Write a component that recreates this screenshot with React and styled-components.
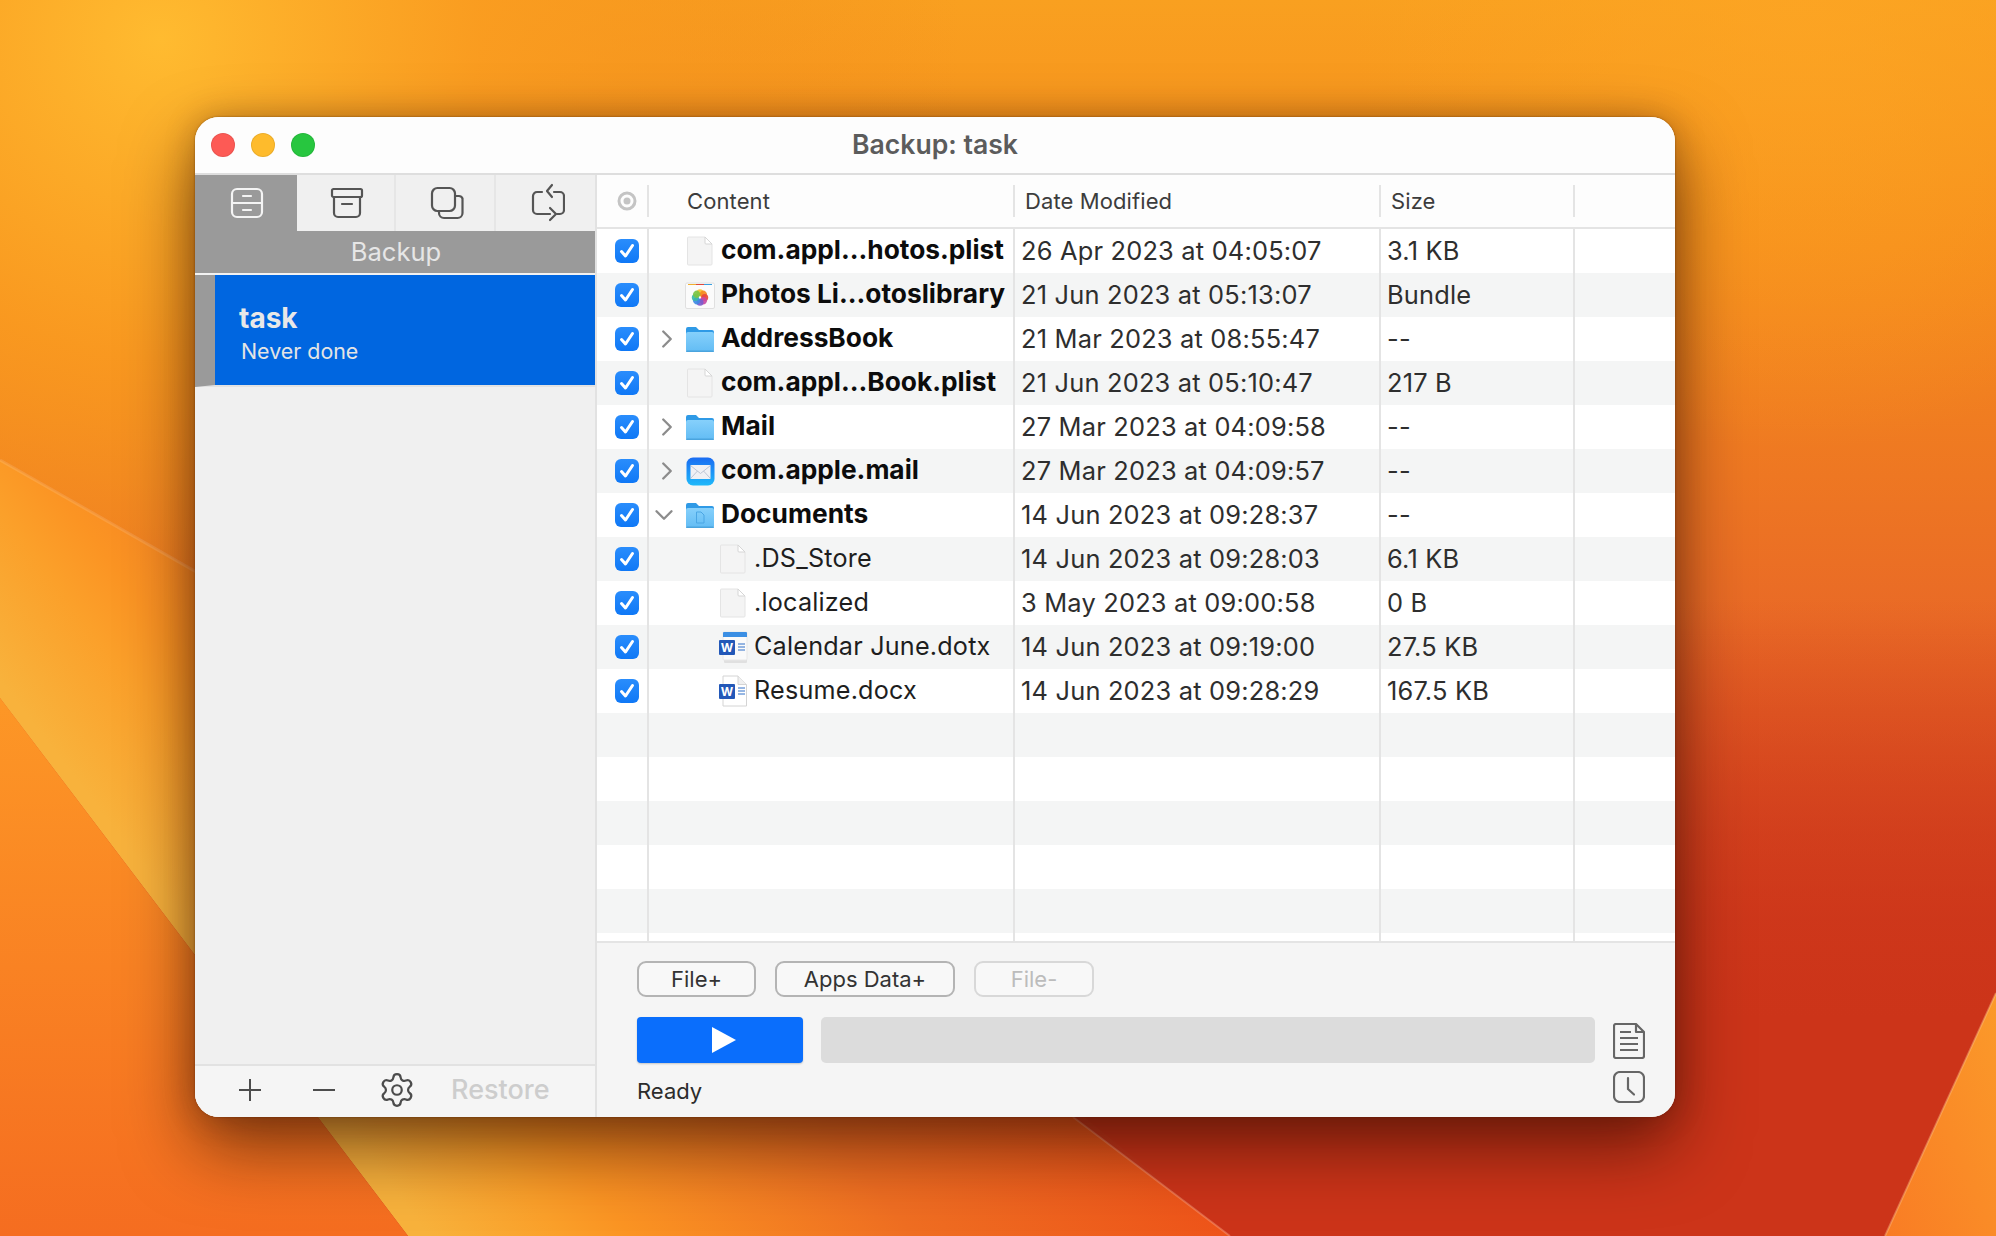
import styled, { createGlobalStyle } from 'styled-components';
import { ChevronDown, ChevronRight, Settings } from 'lucide-react';

const GlobalStyle = createGlobalStyle`
    html, body {
        margin: 0;
        padding: 0;
    }
    body {
        font-family: 'Inter', 'Liberation Sans', sans-serif;
        -webkit-font-smoothing: antialiased;
    }
    * {
        box-sizing: border-box;
    }
`;

const Desktop = styled.div`
    position: relative;
    width: 1996px;
    height: 1236px;
    padding: 117px 0 0 195px;
    overflow: hidden;
`;

const WallpaperSvg = styled.svg`
    position: absolute;
    inset: 0;
`;

const Window = styled.div`
    position: relative;
    width: 1480px;
    height: 1000px;
    display: flex;
    flex-direction: column;
    border-radius: 24px;
    overflow: hidden;
    background: #f5f5f5;
`;

const WindowShadow = styled.div`
    position: relative;
    width: 1480px;
    height: 1000px;
    border-radius: 24px;
    box-shadow: 0 0 2px rgba(70, 30, 0, 0.6), 0 0 30px rgba(60, 20, 0, 0.25), 0 30px 70px rgba(40, 10, 0, 0.6);
`;

const TitleBar = styled.div`
    position: relative;
    height: 58px;
    flex: none;
    display: flex;
    align-items: center;
    justify-content: center;
    padding-bottom: 2px;
    background: #fdfdfd;
    border-bottom: 2px solid #dedede;
`;

const Lights = styled.div`
    position: absolute;
    left: 16px;
    top: 16px;
    display: flex;
    gap: 16px;
`;

const Light = styled.span`
    width: 24px;
    height: 24px;
    border-radius: 50%;
    background: ${(p) => p.$color};
    box-shadow: inset 0 0 0 1px rgba(0, 0, 0, 0.08);
`;

const Title = styled.div`
    font-size: 26.6px;
    font-weight: 600;
    color: #5c5c5c;
`;

const Body = styled.div`
    flex: 1;
    min-height: 0;
    display: flex;
`;

const Sidebar = styled.div`
    width: 402px;
    flex: none;
    display: flex;
    flex-direction: column;
    background: #f0f0f0;
    border-right: 2px solid #e2e2e2;
`;

const Tabs = styled.div`
    height: 56px;
    flex: none;
    display: grid;
    grid-template-columns: 102px 1fr 1fr 1fr;
`;

const TabItem = styled.div`
    display: flex;
    align-items: center;
    justify-content: center;
    padding-left: ${(p) => (p.$last ? 6 : p.$shift || 2)}px;
    background: ${(p) => (p.$active ? '#9a9a9a' : '#f0f0f0')};
    border-right: ${(p) => (p.$active || p.$last ? 'none' : '2px solid #e6e6e6')};
    color: ${(p) => (p.$active ? '#f4f4f4' : '#555555')};
`;

const SectionBar = styled.div`
    height: 44px;
    flex: none;
    display: flex;
    align-items: center;
    justify-content: center;
    background: #9a9a9a;
    border-bottom: 2px solid #f2f2f2;
    font-size: 25.6px;
    color: #e6e6e6;
    padding: 0 0 1px 2px;
`;

const TaskItem = styled.div`
    height: 112px;
    flex: none;
    display: flex;
    flex-direction: column;
    justify-content: center;
    background: #0066e0;
    border-left: 20px solid #9a9a9a;
    border-bottom: 2px solid #e2e2e2;
    padding: 6px 0 0 24px;
`;

const TaskName = styled.div`
    font-size: 28px;
    font-weight: 700;
    line-height: 36px;
    color: #e8e8e8;
`;

const TaskState = styled.div`
    font-size: 21.4px;
    line-height: 30px;
    margin-left: 2px;
    color: #e4e4e4;
`;

const SideFill = styled.div`
    flex: 1;
`;

const SideFooter = styled.div`
    height: 53px;
    flex: none;
    display: flex;
    align-items: center;
    padding-bottom: 4px;
    background: #f5f5f5;
    border-top: 2px solid #e2e2e2;
    color: #4c4c4c;
`;

const FooterIcon = styled.div`
    width: ${(p) => p.$w}px;
    display: flex;
    justify-content: center;
`;

const RestoreLabel = styled.div`
    font-size: 27px;
    font-weight: 500;
    color: #cdcdcd;
`;

const Content = styled.div`
    flex: 1;
    min-width: 0;
    display: flex;
    flex-direction: column;
`;

const columns = '52px 366px 366px 194px 1fr';

const TableHead = styled.div`
    height: 54px;
    flex: none;
    display: grid;
    grid-template-columns: ${columns};
    align-items: center;
    background: #fdfdfd;
    border-bottom: 2px solid #e4e4e4;
`;

const HeadCell = styled.div`
    height: 32px;
    display: flex;
    align-items: center;
    padding-left: ${(p) => p.$pad || 0}px;
    border-right: ${(p) => (p.$plain ? 'none' : '2px solid #e4e4e4')};
    font-size: 22px;
    letter-spacing: 0.1px;
    color: #3c3c3c;
`;

const TableBody = styled.div`
    height: 712px;
    flex: none;
    overflow: hidden;
    background: #ffffff;
`;

const Row = styled.div`
    height: 44px;
    display: grid;
    grid-template-columns: ${columns};
    background: ${(p) => (p.$striped ? '#f4f5f5' : '#ffffff')};
`;

const Cell = styled.div`
    min-width: 0;
    display: flex;
    align-items: center;
    padding-left: ${(p) => p.$pad || 0}px;
    padding-bottom: ${(p) => (p.$text ? 2 : 0)}px;
    border-right: ${(p) => (p.$plain ? 'none' : '2px solid #e4e4e4')};
    font-size: 25.4px;
    letter-spacing: 0.2px;
    color: #2e2e2e;
    white-space: nowrap;
`;

const Spacer = styled.div`
    height: 8px;
    display: grid;
    grid-template-columns: ${columns};
`;

const CheckBox = styled.span`
    width: 24px;
    height: 24px;
    margin-left: 18px;
    display: flex;
    align-items: center;
    justify-content: center;
    border-radius: 6px;
    background: linear-gradient(#2a8dfc, #0f78f6);
`;

const Toggle = styled.span`
    width: 30px;
    flex: none;
    display: flex;
    justify-content: center;
    color: #8c8c8c;
    margin-left: ${(p) => (p.$open ? 0 : 3)}px;
    margin-right: ${(p) => (p.$open ? 3 : 0)}px;
`;

const NameWrap = styled.div`
    display: flex;
    align-items: center;
    padding-left: ${(p) => 3 + p.$level * 33}px;
`;

const IconSlot = styled.span`
    width: 32px;
    height: 32px;
    flex: none;
    margin: 0 5px 0 -1px;
    display: flex;
    align-items: center;
    justify-content: center;
`;

const FileName = styled.span`
    font-size: ${(p) => (p.$bold ? 26.3 : 25.2)}px;
    font-weight: ${(p) => (p.$bold ? 700 : 400)};
    color: ${(p) => (p.$bold ? '#0c0c0c' : '#1e1e1e')};
    letter-spacing: ${(p) => (p.$bold ? 0 : 0.2)}px;
    margin-top: -3px;
`;

const ActionPanel = styled.div`
    flex: 1;
    padding: 18px 22px 0 40px;
    background: #f5f5f5;
    border-top: 2px solid #e4e4e4;
`;

const ButtonRow = styled.div`
    display: flex;
    gap: 19px;
`;

const PillButton = styled.div`
    width: ${(p) => p.$w}px;
    height: 36px;
    display: flex;
    align-items: center;
    justify-content: center;
    background: #f8f8f8;
    border: 2px solid ${(p) => (p.$disabled ? '#d8d8d8' : '#b4b4b4')};
    border-radius: 9px;
    font-size: 22px;
    color: ${(p) => (p.$disabled ? '#bcbcbc' : '#333333')};
`;

const RunArea = styled.div`
    display: flex;
    gap: 18px;
    margin-top: 20px;
`;

const RunLeft = styled.div`
    width: 958px;
    flex: none;
`;

const RunRow = styled.div`
    display: flex;
    gap: 18px;
`;

const PlayButton = styled.div`
    width: 166px;
    height: 46px;
    display: flex;
    align-items: center;
    justify-content: center;
    padding-left: 8px;
    border-radius: 4px;
    background: #0a6efc;
    box-shadow: 0 1px 2px rgba(0, 0, 0, 0.2);
`;

const Progress = styled.div`
    flex: 1;
    height: 46px;
    border-radius: 5px;
    background: #dcdcdc;
`;

const Status = styled.div`
    margin-top: 15px;
    font-size: 22px;
    color: #2c2c2c;
`;

const SideIcons = styled.div`
    display: flex;
    flex-direction: column;
    gap: 12px;
    padding-top: 6px;
    color: #666666;
`;

const Wallpaper = () => (
    <WallpaperSvg width="1996" height="1236" viewBox="0 0 1996 1236">
        <defs>
            <linearGradient id="base" x1="0" y1="0" x2="0" y2="1">
                <stop offset="0" stopColor="#f9a020" />
                <stop offset="0.2" stopColor="#f68c1c" />
                <stop offset="0.5" stopColor="#e96a26" />
                <stop offset="0.75" stopColor="#d3401f" />
                <stop offset="1" stopColor="#c8341a" />
            </linearGradient>
            <radialGradient id="glowLeft" gradientUnits="userSpaceOnUse" cx="160" cy="40" r="800">
                <stop offset="0" stopColor="#ffbb30" stopOpacity="1" />
                <stop offset="0.4" stopColor="#fa9c20" stopOpacity="0.85" />
                <stop offset="1" stopColor="#f08a1c" stopOpacity="0" />
            </radialGradient>
            <radialGradient id="glowRight" gradientUnits="userSpaceOnUse" cx="1800" cy="0" r="450">
                <stop offset="0" stopColor="#fda624" stopOpacity="0.7" />
                <stop offset="1" stopColor="#fda822" stopOpacity="0" />
            </radialGradient>
            <linearGradient id="band" gradientUnits="userSpaceOnUse" x1="200" y1="940" x2="753" y2="513">
                <stop offset="0" stopColor="#f8b23c" />
                <stop offset="0.15" stopColor="#fba02a" />
                <stop offset="0.23" stopColor="#fb9423" />
                <stop offset="0.55" stopColor="#ef6e22" />
                <stop offset="1" stopColor="#ee4e18" />
            </linearGradient>
            <linearGradient id="lower" x1="0" y1="0" x2="0" y2="1">
                <stop offset="0" stopColor="#fd9726" />
                <stop offset="1" stopColor="#f56d20" />
            </linearGradient>
            <linearGradient id="red" gradientUnits="userSpaceOnUse" x1="0" y1="600" x2="0" y2="1020">
                <stop offset="0" stopColor="#cc3419" stopOpacity="0" />
                <stop offset="1" stopColor="#cc3419" stopOpacity="1" />
            </linearGradient>
            <linearGradient id="wedge" x1="1" y1="0" x2="0" y2="1">
                <stop offset="0" stopColor="#fb9a2a" />
                <stop offset="1" stopColor="#f97c24" />
            </linearGradient>
        </defs>
        <rect width="1996" height="1236" fill="url(#base)" />
        <rect width="1996" height="1236" fill="url(#glowLeft)" />
        <rect width="1996" height="1236" fill="url(#glowRight)" />
        <polygon points="940,1000 1230,1236 1885,1236 1996,993 1996,600 1300,600" fill="url(#red)" />
        <polygon points="0,460 1000,1030 1073,1117 1230,1236 408,1236 0,698" fill="url(#band)" />
        <polygon points="0,698 408,1236 0,1236" fill="url(#lower)" />
        <polygon points="1996,993 1885,1236 1996,1236" fill="url(#wedge)" />
        <line x1="0" y1="460" x2="400" y2="688" stroke="#ffffff" strokeOpacity="0.12" strokeWidth="3" />
        <line x1="1073" y1="1117" x2="1230" y2="1236" stroke="#ffb090" strokeOpacity="0.4" strokeWidth="2" />
        <line x1="1996" y1="993" x2="1885" y2="1236" stroke="#ffc890" strokeOpacity="0.4" strokeWidth="2" />
    </WallpaperSvg>
);

const DrawerIcon = () => (
    <svg width="34" height="32" viewBox="0 0 34 32" fill="none" stroke="currentColor" strokeWidth="2.2" strokeLinecap="round">
        <rect x="2" y="2" width="30" height="28" rx="5" />
        <path d="M2 16h30M13 9h8M13 23h8" />
    </svg>
);

const ArchiveIcon = () => (
    <svg width="34" height="32" viewBox="0 0 34 32" fill="none" stroke="currentColor" strokeWidth="2.2" strokeLinecap="round">
        <rect x="2" y="2" width="30" height="8" rx="1.5" />
        <path d="M4 10v16a4 4 0 0 0 4 4h18a4 4 0 0 0 4-4V10M12 17h10" />
    </svg>
);

const CopyIcon = () => (
    <svg width="34" height="34" viewBox="0 0 34 34" fill="none" stroke="currentColor" strokeWidth="2.2" strokeLinecap="round">
        <rect x="2" y="2" width="23" height="23" rx="5.5" />
        <path d="M25 10h3.5a4 4 0 0 1 4 2.5V27a5 5 0 0 1-5 5H14a5 5 0 0 1-5-5v-2" />
    </svg>
);

const SyncIcon = () => (
    <svg width="34" height="40" viewBox="0 0 34 40" fill="none" stroke="currentColor" strokeWidth="2.2" strokeLinecap="round" strokeLinejoin="round">
        <path d="M11 9H6a4 4 0 0 0-4 4v14a4 4 0 0 0 4 4h13" />
        <path d="M19 25l6 6-6 6" />
        <path d="M23 9h6a4 4 0 0 1 4 4v14a4 4 0 0 1-4 4h-3" />
        <path d="M21 2l-5 6 5 6" />
    </svg>
);

const CheckMark = () => (
    <svg width="18" height="18" viewBox="0 0 18 18" fill="none" stroke="#ffffff" strokeWidth="3" strokeLinecap="round" strokeLinejoin="round">
        <path d="M3.5 9.5l4 4.5L14.5 3.5" />
    </svg>
);

const RadioIcon = () => (
    <svg width="20" height="20" viewBox="0 0 20 20">
        <circle cx="10" cy="10" r="8" fill="none" stroke="#c4c4c4" strokeWidth="3" />
        <circle cx="10" cy="10" r="3.5" fill="#c4c4c4" />
    </svg>
);

const FileIcon = () => (
    <svg width="28" height="30" viewBox="0 0 28 30">
        <path d="M2.5 1h16.5l7 7v20a1 1 0 0 1-1 1H2.5a1 1 0 0 1-1-1V2a1 1 0 0 1 1-1z" fill="#f4f4f4" stroke="#e4e4e4" />
        <path d="M19 1v6a1 1 0 0 0 1 1h6z" fill="#ffffff" stroke="#d6d6d6" />
    </svg>
);

const FolderIcon = ({ doc }) => (
    <svg width="30" height="28" viewBox="0 0 30 28">
        <defs>
            <linearGradient id="folderFill" x1="0" y1="0" x2="0" y2="1">
                <stop offset="0" stopColor="#86d0fb" />
                <stop offset="1" stopColor="#62bcf4" />
            </linearGradient>
        </defs>
        <path d="M1 4a2 2 0 0 1 2-2h8l3 3h13a2 2 0 0 1 2 2v4H1z" fill="#2f9ae6" />
        <rect x="1" y="7" width="28" height="20" rx="2" fill="url(#folderFill)" />
        <rect x="1" y="25.5" width="28" height="1.5" rx="0.7" fill="#4aa4de" />
        {doc && <path d="M11.5 11h4.5l3 3v8h-7.5z" fill="none" stroke="#4aa6e4" strokeWidth="1" />}
    </svg>
);

const PhotosIcon = () => {
    const petals = ['#f8c02c', '#f58a20', '#e8483c', '#c84aa4', '#7c5ccc', '#3f8ae4', '#39b8a8', '#7cc444'];
    return (
        <svg width="30" height="27" viewBox="0 0 30 27">
            <rect x="0.5" y="1" width="29" height="25.5" rx="1.5" fill="#fbfbfb" stroke="#e0e0e0" />
            <path d="M3 2.5h8" stroke="#f0b030" strokeWidth="1" />
            <path d="M11 2.5h8" stroke="#e0483c" strokeWidth="1" />
            <path d="M19 2.5h8" stroke="#3aa0e0" strokeWidth="1" />
            {petals.map((color, i) => (
                <circle key={color} cx="15" cy="10.8" r="3.5" fill={color} opacity="0.92" transform={`rotate(${i * 45} 15 15.5)`} />
            ))}
        </svg>
    );
};

const MailIcon = () => (
    <svg width="29" height="29" viewBox="0 0 29 29">
        <defs>
            <linearGradient id="mailFill" x1="0" y1="0" x2="0" y2="1">
                <stop offset="0" stopColor="#1a6cf2" />
                <stop offset="1" stopColor="#1fb9fa" />
            </linearGradient>
        </defs>
        <rect x="0.5" y="0.5" width="28" height="28" rx="6.5" fill="url(#mailFill)" />
        <rect x="4.5" y="8" width="20" height="14" rx="1" fill="#f0f0f4" />
        <path d="M4.5 8.5l10 8 10-8M4.5 21.5l7-7.5M24.5 21.5l-7-7.5" fill="none" stroke="#b8c0d0" strokeWidth="0.9" />
    </svg>
);

const WordIcon = ({ template }) => (
    <svg width="30" height="32" viewBox="0 0 30 32">
        {template ? (
            <>
                <rect x="6" y="6" width="23" height="26" rx="1" fill="#e0e0e0" />
                <rect x="5" y="1" width="24" height="28" rx="1" fill="#fafafa" stroke="#e8e8e8" />
                <path d="M5 6V2a1 1 0 0 1 1-1h22a1 1 0 0 1 1 1v4z" fill="#3b8fe4" />
            </>
        ) : (
            <>
                <path d="M5 1h15l8.5 8.5V31H5z" fill="#ffffff" stroke="#d4d4d4" />
                <path d="M20 1v8.5h8.5" fill="#f0f0f0" stroke="#d4d4d4" />
            </>
        )}
        <path d="M20 13h7M20 16h7M20 19h7" stroke="#2f6fc8" strokeWidth="1" />
        <rect x="1" y="9" width="16" height="15" rx="1" fill="#2358b8" />
        <text x="9" y="21" textAnchor="middle" fontFamily="Inter, sans-serif" fontSize="12" fontWeight="700" fill="#ffffff">W</text>
    </svg>
);

const PlayGlyph = () => (
    <svg width="24" height="26" viewBox="0 0 24 26">
        <path d="M0 0l24 13L0 26z" fill="#ffffff" />
    </svg>
);

const LineGlyph = ({ plus }) => (
    <svg width="24" height="24" viewBox="0 0 24 24" stroke="currentColor" strokeWidth="2">
        <path d={plus ? 'M1 12h22M12 1v22' : 'M1 12h22'} />
    </svg>
);

const LogIcon = () => (
    <svg width="32" height="36" viewBox="0 0 32 36" fill="none" stroke="currentColor" strokeWidth="2.2" strokeLinejoin="round">
        <path d="M3 1h20l8 8v24a2 2 0 0 1-2 2H3a2 2 0 0 1-2-2V3a2 2 0 0 1 2-2z" />
        <path d="M23 1v8h8" />
        <path d="M7 9h11M7 15h18M7 21h18M7 27h18" />
    </svg>
);

const ClockIcon = () => (
    <svg width="32" height="32" viewBox="0 0 32 32" fill="none" stroke="currentColor" strokeWidth="2.2" strokeLinecap="round">
        <rect x="1" y="1" width="30" height="30" rx="6" />
        <path d="M15 7v11l6 5.5" />
    </svg>
);

const fileIcons = {
    file: <FileIcon />,
    photos: <PhotosIcon />,
    folder: <FolderIcon />,
    mail: <MailIcon />,
    docs: <FolderIcon doc />,
    word: <WordIcon />,
    dotx: <WordIcon template />,
};

const files = [
    { name: 'com.appl...hotos.plist', date: '26 Apr 2023 at 04:05:07', size: '3.1 KB', icon: 'file', bold: true },
    { name: 'Photos Li...otoslibrary', date: '21 Jun 2023 at 05:13:07', size: 'Bundle', icon: 'photos', bold: true },
    { name: 'AddressBook', date: '21 Mar 2023 at 08:55:47', size: '--', icon: 'folder', bold: true, toggle: 'closed' },
    { name: 'com.appl...Book.plist', date: '21 Jun 2023 at 05:10:47', size: '217 B', icon: 'file', bold: true },
    { name: 'Mail', date: '27 Mar 2023 at 04:09:58', size: '--', icon: 'folder', bold: true, toggle: 'closed' },
    { name: 'com.apple.mail', date: '27 Mar 2023 at 04:09:57', size: '--', icon: 'mail', bold: true, toggle: 'closed' },
    { name: 'Documents', date: '14 Jun 2023 at 09:28:37', size: '--', icon: 'docs', bold: true, toggle: 'open' },
    { name: '.DS_Store', date: '14 Jun 2023 at 09:28:03', size: '6.1 KB', icon: 'file', level: 1 },
    { name: '.localized', date: '3 May 2023 at 09:00:58', size: '0 B', icon: 'file', level: 1 },
    { name: 'Calendar June.dotx', date: '14 Jun 2023 at 09:19:00', size: '27.5 KB', icon: 'dotx', level: 1 },
    { name: 'Resume.docx', date: '14 Jun 2023 at 09:28:29', size: '167.5 KB', icon: 'word', level: 1 },
];

const emptyRows = [0, 1, 2, 3, 4];

const FileRow = ({ file, striped }) => (
    <Row $striped={striped}>
        <Cell>
            <CheckBox>
                <CheckMark />
            </CheckBox>
        </Cell>
        <Cell>
            <Toggle $open={file.toggle === 'open'}>
                {file.toggle === 'closed' && <ChevronRight size={30} strokeWidth={1.9} />}
                {file.toggle === 'open' && <ChevronDown size={30} strokeWidth={1.9} />}
            </Toggle>
            <NameWrap $level={file.level || 0}>
                <IconSlot>{fileIcons[file.icon]}</IconSlot>
                <FileName $bold={file.bold}>{file.name}</FileName>
            </NameWrap>
        </Cell>
        <Cell $pad={6} $text>
            {file.date}
        </Cell>
        <Cell $pad={6} $text>
            {file.size}
        </Cell>
        <Cell $plain />
    </Row>
);

const App = () => (
    <Desktop>
        <GlobalStyle />
        <Wallpaper />
        <WindowShadow>
            <Window>
                <TitleBar>
                    <Lights>
                        <Light $color="#fd5a55" />
                        <Light $color="#febb2c" />
                        <Light $color="#27c63f" />
                    </Lights>
                    <Title>Backup: task</Title>
                </TitleBar>
                <Body>
                    <Sidebar>
                        <Tabs>
                            <TabItem $active>
                                <DrawerIcon />
                            </TabItem>
                            <TabItem>
                                <ArchiveIcon />
                            </TabItem>
                            <TabItem $shift={4}>
                                <CopyIcon />
                            </TabItem>
                            <TabItem $last>
                                <SyncIcon />
                            </TabItem>
                        </Tabs>
                        <SectionBar>Backup</SectionBar>
                        <TaskItem>
                            <TaskName>task</TaskName>
                            <TaskState>Never done</TaskState>
                        </TaskItem>
                        <SideFill />
                        <SideFooter>
                            <FooterIcon $w={110}>
                                <LineGlyph plus />
                            </FooterIcon>
                            <FooterIcon $w={38}>
                                <LineGlyph />
                            </FooterIcon>
                            <FooterIcon $w={108}>
                                <Settings size={38} strokeWidth={1.4} />
                            </FooterIcon>
                            <RestoreLabel>Restore</RestoreLabel>
                        </SideFooter>
                    </Sidebar>
                    <Content>
                        <TableHead>
                            <HeadCell $pad={20}>
                                <RadioIcon />
                            </HeadCell>
                            <HeadCell $pad={38}>Content</HeadCell>
                            <HeadCell $pad={10}>Date Modified</HeadCell>
                            <HeadCell $pad={10}>Size</HeadCell>
                            <HeadCell $plain />
                        </TableHead>
                        <TableBody>
                            {files.map((file, i) => (
                                <FileRow key={file.name} file={file} striped={i % 2 === 1} />
                            ))}
                            {emptyRows.map((n) => (
                                <Row key={n} $striped={n % 2 === 0}>
                                    <Cell />
                                    <Cell />
                                    <Cell />
                                    <Cell />
                                    <Cell $plain />
                                </Row>
                            ))}
                            <Spacer>
                                <Cell />
                                <Cell />
                                <Cell />
                                <Cell />
                                <Cell $plain />
                            </Spacer>
                        </TableBody>
                        <ActionPanel>
                            <ButtonRow>
                                <PillButton $w={119}>File+</PillButton>
                                <PillButton $w={180}>Apps Data+</PillButton>
                                <PillButton $w={120} $disabled>
                                    File-
                                </PillButton>
                            </ButtonRow>
                            <RunArea>
                                <RunLeft>
                                    <RunRow>
                                        <PlayButton>
                                            <PlayGlyph />
                                        </PlayButton>
                                        <Progress />
                                    </RunRow>
                                    <Status>Ready</Status>
                                </RunLeft>
                                <SideIcons>
                                    <LogIcon />
                                    <ClockIcon />
                                </SideIcons>
                            </RunArea>
                        </ActionPanel>
                    </Content>
                </Body>
            </Window>
        </WindowShadow>
    </Desktop>
);

export default App;
